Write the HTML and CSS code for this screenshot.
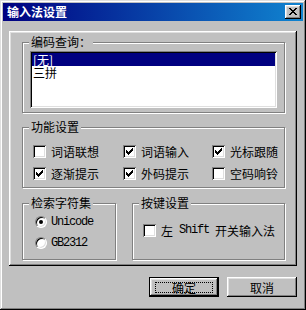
FILE: index.html
```html
<!DOCTYPE html>
<html lang="zh">
<head>
    <meta charset="UTF-8">
    <title>输入法设置</title>
    <link rel="stylesheet" href="styles.css">
</head>
<body>

<div class="window">
    <div class="titlebar">
        <span class="title">输入法设置</span>
        <span class="close">
            <svg width="8" height="7" viewBox="0 0 8 7" shape-rendering="crispEdges"><path d="M0 0h2v1H0zM6 0h2v1H6zM1 1h2v1H1zM5 1h2v1H5zM2 2h4v1H2zM3 3h2v1H3zM2 4h4v1H2zM1 5h2v1H1zM5 5h2v1H5zM0 6h2v1H0zM6 6h2v1H6z" fill="#000"/></svg>
        </span>
    </div>

    <div class="panel">
        <div class="group group-code">
            <span class="legend">编码查询：</span>
            <div class="listbox">
                <div class="item selected">[无]</div>
                <div class="item">三拼</div>
            </div>
        </div>

        <div class="group group-func">
            <span class="legend">功能设置</span>
            <div class="options">
                <label class="check"><span class="box"></span>词语联想</label>
                <label class="check"><span class="box checked"></span>词语输入</label>
                <label class="check"><span class="box checked"></span>光标跟随</label>
                <label class="check"><span class="box checked"></span>逐渐提示</label>
                <label class="check"><span class="box checked"></span>外码提示</label>
                <label class="check"><span class="box"></span>空码响铃</label>
            </div>
        </div>

        <div class="row">
            <div class="group group-charset">
                <span class="legend">检索字符集</span>
                <label class="radio-row"><span class="radio on"></span><span class="latin">Unicode</span></label>
                <label class="radio-row"><span class="radio"></span><span class="latin">GB2312</span></label>
            </div>
            <div class="group group-keys">
                <span class="legend">按键设置</span>
                <label class="check"><span class="box"></span>左<span class="latin"> Shift </span>开关输入法</label>
            </div>
        </div>
    </div>

    <div class="buttons">
        <button class="btn default" type="button"><span class="focus">确定</span></button>
        <button class="btn" type="button"><span class="nofocus">取消</span></button>
    </div>
</div>

</body>
</html>
```

FILE: styles.css
```css
* {
    box-sizing: border-box;
}
body {
    margin: 0;
    background: #c0c0c0;
    font-family: "Noto Sans CJK SC", "DejaVu Sans", sans-serif;
    font-size: 12px;
    color: #000;
}
.window {
    width: 306px;
    height: 310px;
    padding: 3px;
    background: #c0c0c0;
    box-shadow: inset -1px -1px #000, inset 1px 1px #dfdfdf, inset -2px -2px #808080, inset 2px 2px #fff;
    display: flex;
    flex-direction: column;
}
.titlebar {
    height: 18px;
    display: flex;
    align-items: center;
    justify-content: space-between;
    padding: 0 2px 0 4px;
    background: linear-gradient(to right, #000080, #1084d0);
    color: #fff;
    font-weight: bold;
}
.title {
    line-height: 18px;
}
.close {
    width: 16px;
    height: 14px;
    background: #c0c0c0;
    box-shadow: inset -1px -1px #000, inset 1px 1px #fff, inset -2px -2px #808080, inset 2px 2px #dfdfdf;
    display: flex;
    align-items: center;
    justify-content: center;
}
.close svg {
    display: block;
    margin: -1px 0 0 -1px;
}
.panel {
    margin: 10px 6px 0;
    height: 235px;
    padding: 11px 12px 0 13px;
    box-shadow: inset -1px -1px #000, inset 1px 1px #fff, inset -2px -2px #808080, inset 2px 2px #dfdfdf;
    display: flex;
    flex-direction: column;
}
.group {
    position: relative;
    border: 1px solid #808080;
    box-shadow: inset 1px 1px #fff, 1px 1px #fff;
}
.legend {
    position: absolute;
    top: -8px;
    left: 6px;
    padding: 0 2px;
    background: #c0c0c0;
    line-height: 14px;
    white-space: nowrap;
}
.group-code {
    height: 71px;
    padding: 8px 7px 0 7px;
}
.listbox {
    height: 57px;
    padding: 2px;
    background: #fff;
    box-shadow: inset 1px 1px #808080, inset -1px -1px #fff, inset 2px 2px #000, inset -2px -2px #dfdfdf;
}
.item {
    height: 13px;
    line-height: 13px;
    padding-left: 1px;
}
.selected {
    background: #000080;
    color: #fff;
}
.group-func {
    margin-top: 14px;
    height: 61px;
    padding: 17px 0 0 10px;
}
.options {
    display: grid;
    grid-template-columns: 90px 89px auto;
    row-gap: 9px;
}
.check {
    display: flex;
    align-items: center;
    height: 13px;
    line-height: 13px;
    white-space: nowrap;
}
.box {
    width: 13px;
    height: 13px;
    flex: none;
    margin-right: 5px;
    background: #fff;
    box-shadow: inset 1px 1px #808080, inset -1px -1px #fff, inset 2px 2px #000, inset -2px -2px #dfdfdf;
}
.box.checked {
    background: #fff url("data:image/svg+xml,%3Csvg xmlns='http://www.w3.org/2000/svg' width='7' height='7' shape-rendering='crispEdges'%3E%3Cpath d='M0 2h1v3H0zM1 3h1v3H1zM2 4h1v3H2zM3 3h1v3H3zM4 2h1v3H4zM5 1h1v3H5zM6 0h1v3H6z'/%3E%3C/svg%3E") no-repeat 3px 3px;
}
.row {
    margin-top: 15px;
    display: flex;
    gap: 16px;
}
.group-charset {
    width: 94px;
    height: 57px;
    padding: 12px 0 0 12px;
    display: flex;
    flex-direction: column;
    gap: 9px;
}
.group-keys {
    flex: 1;
    height: 57px;
    padding: 20px 0 0 10px;
}
.radio-row {
    display: flex;
    align-items: center;
    height: 12px;
}
.radio {
    width: 12px;
    height: 12px;
    flex: none;
    margin-right: 4px;
    border-radius: 50%;
    background: #fff;
    border: 1px solid;
    border-color: #808080 #fff #fff #808080;
    box-shadow: inset 1px 1px #000, inset -1px -1px #dfdfdf;
    display: flex;
    align-items: center;
    justify-content: center;
}
.radio.on::after {
    content: "";
    width: 4px;
    height: 4px;
    border-radius: 50%;
    background: #000;
}
.latin {
    font-family: "Liberation Mono", "DejaVu Sans Mono", monospace;
    font-size: 12px;
    letter-spacing: -1.2px;
    white-space: pre;
}
.buttons {
    margin-top: 11px;
    padding-right: 6px;
    display: flex;
    justify-content: flex-end;
    gap: 8px;
}
.btn {
    width: 70px;
    height: 20px;
    padding: 4px 5px 3px 5px;
    border: none;
    background: #c0c0c0;
    font-family: inherit;
    font-size: 12px;
    color: #000;
    box-shadow: inset -1px -1px #000, inset 1px 1px #fff, inset -2px -2px #808080, inset 2px 2px #dfdfdf;
}
.btn.default {
    border: 1px solid #000;
}
.focus,
.nofocus {
    display: flex;
    height: 100%;
    align-items: center;
    justify-content: center;
    border: 1px dotted transparent;
}
.focus {
    border-color: #000;
}
```
